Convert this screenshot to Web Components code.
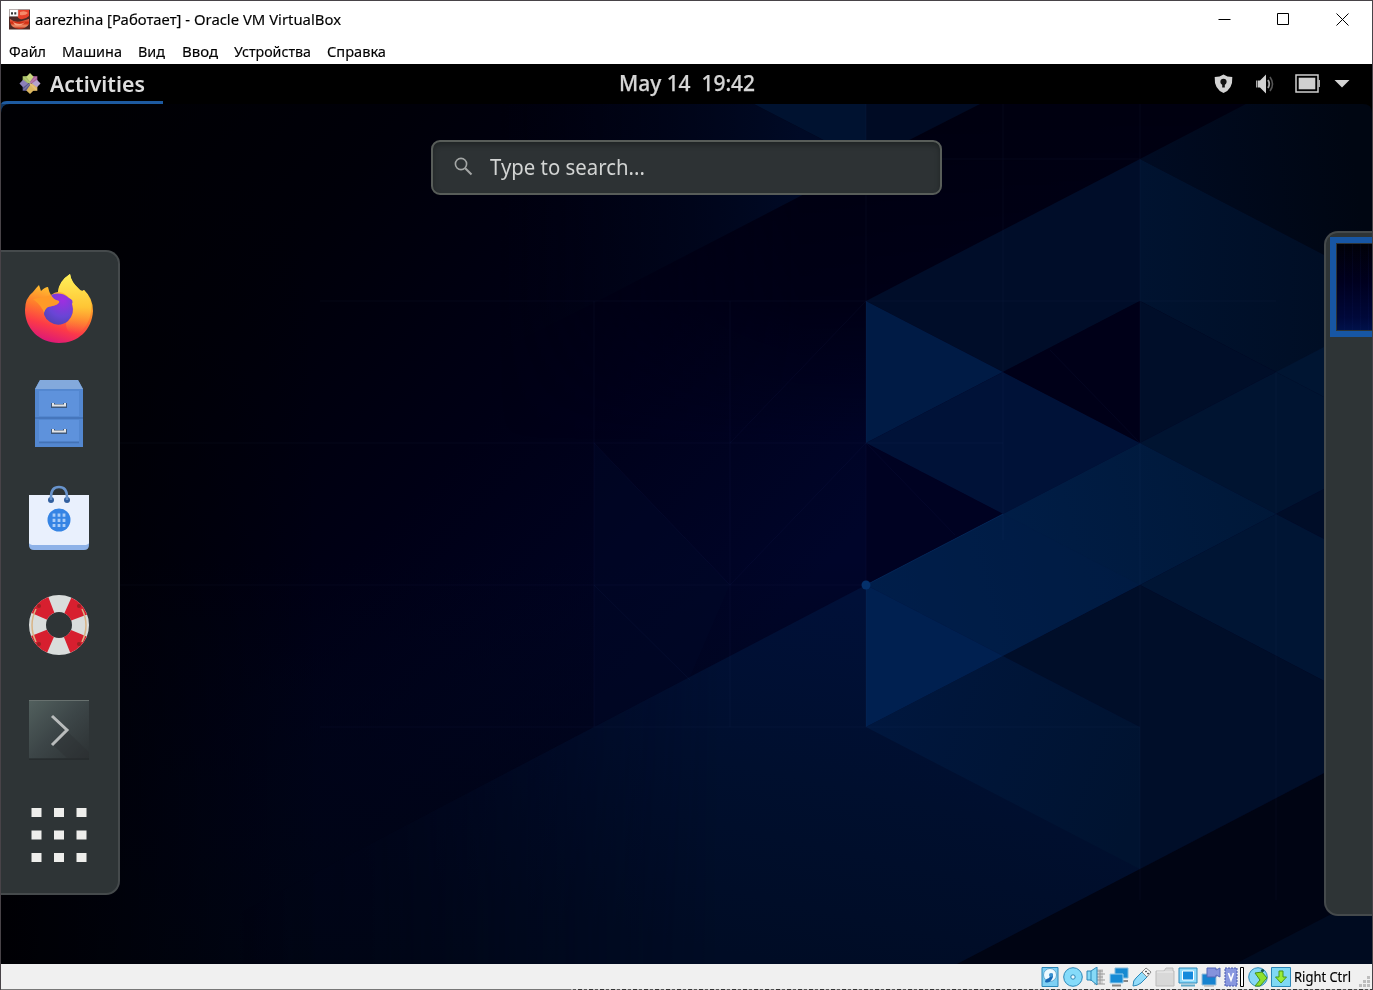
<!DOCTYPE html>
<html lang="ru"><head><meta charset="utf-8"><title>aarezhina [Работает] - Oracle VM VirtualBox</title>
<style>html,body{margin:0;height:990px;overflow:hidden;background:#fff}</style></head>
<body><vm-window></vm-window>
<script>
const define=(name,html,after)=>customElements.define(name,class extends HTMLElement{
  connectedCallback(){ if(this.shadowRoot) return;
    const t=document.createElement('template'); t.innerHTML=html;
    this.attachShadow({mode:'open'}).append(t.content.cloneNode(true));
    if(after) after(this); }
});

/* text squeezed or stretched to a given advance width */
define('fit-text',`<style>:host{display:inline-block;white-space:pre;text-align:left}span{display:inline-block;transform-origin:0 50%}</style><span><slot></slot></span>`,
 el=>{const s=el.shadowRoot.querySelector('span'),w=+el.getAttribute('w');const n=s.offsetWidth;el.style.width=w+'px';if(n)s.style.transform='scaleX('+(w/s.getBoundingClientRect().width)+')';});

define('title-bar',`<style>
:host{display:flex;height:37px;background:#fff;align-items:center;padding:0 9px 0 8px;color:#000;font:15px/20px "Noto Sans","Open Sans",sans-serif;-webkit-text-stroke:.15px #000}
fit-text{margin:-1px auto 0 5px}
.c{width:13px;height:13px;margin-left:46px;fill:none;stroke:#000;stroke-width:1}
.c:last-child{margin-right:14px}svg{display:block}
</style>
<svg width="21" height="21" viewBox="0 0 21 21" style="margin-top:-1px"><defs><linearGradient id="r" x2="0" y2="1"><stop stop-color="#e9745a"/><stop offset=".4" stop-color="#d0260c"/><stop offset=".7" stop-color="#f09068"/><stop offset="1" stop-color="#b01504"/></linearGradient></defs>
<rect width="21" height="20" y=".5" fill="#4d2a26"/><path d="M8 1h12v6q-4 4-9 3-4-2-2-6z" fill="#e8402a"/><path d="M11 3q5-2 8 1-3 3-8 2z" fill="#f58a6a"/><path d="M1 10q5 4 12 2l7-2v5q-3 5-10 5-8-1-9-7z" fill="url(#r)"/><path d="M4 13q7 4 12 0-4 5-10 3z" fill="#f6a283"/><rect x=".5" y=".8" width="8.5" height="6.4" fill="#fff" stroke="#bbb" stroke-width=".5"/><path d="M2 3.2h2v2.400H2zM5.300 3.200h2v2.400h-2z" fill="#333"/></svg>
<fit-text w="306">aarezhina [Работает] - Oracle VM VirtualBox</fit-text>
<svg class="c" viewBox="0 0 13 13"><path d="M.5 6.500h12"/></svg>
<svg class="c" viewBox="0 0 13 13"><path d="M.5.500h11v11H.5z"/></svg>
<svg class="c" viewBox="0 0 13 13"><path d="M.5.500l12 12m0-12l-12 12"/></svg>`);

define('menu-bar',`<style>:host{display:flex;height:26px;background:#fff;gap:16.200px;padding-left:8px;color:#000;font:14.500px/26px "Noto Sans","Open Sans",sans-serif;-webkit-text-stroke:.15px #000}</style>
<fit-text w="37">Файл</fit-text><fit-text w="60">Машина</fit-text><fit-text w="27">Вид</fit-text><fit-text w="36">Ввод</fit-text><fit-text w="77">Устройства</fit-text><fit-text w="59">Справка</fit-text>`);

define('gnome-panel',`<style>
:host{display:grid;grid-template-columns:1fr auto 1fr;height:40px;background:#000;color:#d6d6d6;font:500 22px/36px "Noto Sans","Open Sans",sans-serif;position:relative}
.a{display:flex;align-items:center;gap:9px;padding-left:18px;height:37px;font-weight:600;color:#dedede}
.s{display:flex;justify-content:flex-end;align-items:center;height:39px;padding-right:22px}
.m{-webkit-text-stroke:.25px #d6d6d6}
svg{display:block}.u{position:absolute;left:0;top:36px}</style>
<div class="a"><svg width="22" height="23" style="margin-top:2px" viewBox="-12 -12 24 24">
<path d="M-8-8h8v8h-8z" fill="#a3bd62"/><path d="M0-8h8v8H0z" fill="#aa629e"/><path d="M0 0h8v8H0z" fill="#e3b865"/><path d="M-8 0h8v8h-8z" fill="#5b5992"/>
<path d="M0-11.500 4-7.500 0-2-4-7.500z" fill="#c8d77e"/><path d="M11.500 0 7.500 4 2 0 7.500-4z" fill="#b6a2cc"/><path d="M0 11.500-4 7.500 0 2 4 7.500z" fill="#dbb65e"/><path d="M-11.500 0-7.500-4-2 0-7.500 4z" fill="#8b80b8"/>
<path d="M-7-7 7 7M7-7-7 7" stroke="#e4dcc8" stroke-opacity=".55" stroke-width=".8"/></svg><fit-text w="95">Activities</fit-text></div>
<fit-text class="m" w="136">May 14  19:42</fit-text>
<div class="s">
<svg width="19" height="20" viewBox="0 0 19 20"><path d="M9.500 0.500 Q13 3 18.300 3 Q19 15 9.500 19 Q0 15 .7 3 Q6 3 9.500 .5z" fill="#d3d3d3"/><circle cx="9.500" cy="7.800" r="3.100" fill="#111"/><path d="M8.200 8h2.600v5.500H8.200z" fill="#111"/></svg>
<svg style="margin-left:23px" width="18" height="20" viewBox="0 0 18 20"><path d="M0 6.500h1.500v7H0z" fill="#aaa"/><path d="M2 6.500h2L10 0.500v19l-6-6H2z" fill="#d0d0d0"/><path d="M12 6q2.500 4 0 8" fill="none" stroke="#a0a0a0" stroke-width="1.800"/><path d="M14 3q5 7 0 14" fill="none" stroke="#555" stroke-width="1.600"/></svg>
<svg style="margin-left:21px" width="26" height="20" viewBox="0 0 26 20"><path d="M1 1h22v17H1z" fill="none" stroke="#cfcfcf" stroke-width="1.500"/><path d="M3.700 3.700h16.600v11.600H3.700z" fill="#d0d0d0"/><path d="M23 6h2v7h-2z" fill="#aaa"/></svg>
<svg style="margin-left:13px" width="16" height="9" viewBox="0 0 16 9"><path d="M.5 1h15L8 8.500z" fill="#d5d5d5"/></svg></div>
<svg class="u" width="162" height="4" viewBox="0 0 162 4"><path d="M0 4Q1 1 6 1H162V4z" fill="#1d5aa0"/></svg>`);

define('desk-wallpaper',`<style>:host{display:block;position:absolute;inset:0}svg{display:block}</style>
<svg width="1371" height="860" viewBox="1 104 1371 860" shape-rendering="geometricPrecision"><defs>
<linearGradient id="base" gradientUnits="userSpaceOnUse" x1="60" y1="104" x2="700" y2="700"><stop stop-color="#000002"/><stop offset=".3" stop-color="#000009"/><stop offset=".6" stop-color="#000015"/><stop offset="1" stop-color="#00052a"/></linearGradient>
<linearGradient id="bl" gradientUnits="userSpaceOnUse" x1="0" y1="560" x2="0" y2="964"><stop stop-color="#000516" stop-opacity="0"/><stop offset=".6" stop-color="#000416" stop-opacity=".8"/><stop offset="1" stop-color="#000514"/></linearGradient>
<linearGradient id="lk" gradientUnits="userSpaceOnUse" x1="0" y1="0" x2="320" y2="0"><stop stop-color="#000004"/><stop offset=".35" stop-color="#000004" stop-opacity=".65"/><stop offset="1" stop-color="#000008" stop-opacity="0"/></linearGradient>
<linearGradient id="ur" gradientUnits="userSpaceOnUse" x1="0" y1="104" x2="0" y2="440"><stop stop-color="#000010"/><stop offset=".6" stop-color="#000014" stop-opacity=".8"/><stop offset="1" stop-color="#000018" stop-opacity="0"/></linearGradient>
<linearGradient id="urh" gradientUnits="userSpaceOnUse" x1="500" y1="0" x2="800" y2="0"><stop stop-color="#000"/><stop offset="1" stop-color="#fff"/></linearGradient><mask id="um" maskUnits="userSpaceOnUse" x="0" y="0" width="1400" height="1000"><path d="M0 0H1400V1000H0z" fill="url(#urh)"/></mask>
<linearGradient id="fh" gradientUnits="userSpaceOnUse" x1="240" y1="0" x2="720" y2="0"><stop stop-color="#000"/><stop offset=".3" stop-color="#222"/><stop offset="1" stop-color="#fff"/></linearGradient><mask id="fm" maskUnits="userSpaceOnUse" x="0" y="0" width="1400" height="1000"><path d="M0 0H1400V1000H0z" fill="url(#fh)"/></mask>
<linearGradient id="low" gradientUnits="userSpaceOnUse" x1="860" y1="600" x2="780" y2="964"><stop stop-color="#001038"/><stop offset=".5" stop-color="#000f2e"/><stop offset="1" stop-color="#000c25"/></linearGradient>
<linearGradient id="tr" gradientUnits="userSpaceOnUse" x1="1150" y1="160" x2="1350" y2="130"><stop stop-color="#000b22"/><stop offset="1" stop-color="#000612"/></linearGradient>
<linearGradient id="vv" gradientUnits="userSpaceOnUse" x1="1140" y1="0" x2="1323" y2="0"><stop stop-color="#001330"/><stop offset="1" stop-color="#000e25"/></linearGradient>
<linearGradient id="tp" gradientUnits="userSpaceOnUse" x1="500" y1="0" x2="800" y2="0"><stop stop-color="#000412" stop-opacity="0"/><stop offset="1" stop-color="#000a26"/></linearGradient>
<linearGradient id="br" gradientUnits="userSpaceOnUse" x1="866" y1="585" x2="1276" y2="480"><stop stop-color="#00204e"/><stop offset="1" stop-color="#001838"/></linearGradient>
<linearGradient id="pp" gradientUnits="userSpaceOnUse" x1="880" y1="700" x2="1140" y2="800"><stop stop-color="#00173e"/><stop offset="1" stop-color="#001330"/></linearGradient>
</defs>
<path d="M0 104H1372V964H0z" fill="url(#base)"/>
<path d="M500 104H1372V440H500z" fill="url(#ur)" mask="url(#um)"/>
<path d="M0 560H1372V964H0z" fill="url(#bl)"/>
<path d="M500 104H754L866 162 594 303 450 375z" fill="url(#tp)"/>
<path d="M754 104H866V162z" fill="#001230"/><path d="M866 104H980L866 162z" fill="#000b24"/>
<path d="M594 443 730 585 690 677 594 727z" fill="#000828" opacity=".5"/>
<path d="M866 585 594 727 142 964H1372V727z" fill="url(#low)" mask="url(#fm)"/>
<path d="M0 104H320V964H0z" fill="url(#lk)"/>
<path d="M866 301 1140 159V301L1003 372z" fill="#000d29"/>
<path d="M866 301 1003 372 866 443z" fill="#001b45"/>
<path d="M866 443 1003 372 1140 443 1003 514z" fill="#001238"/>
<path d="M866 443 1003 514 866 585z" fill="#000222"/>
<path d="M1003 372 1140 301V443z" fill="#000018"/>
<path d="M1140 159 1246 104H1372V280z" fill="url(#tr)"/>
<path d="M1140 159 1372 280V422L1276 372 1140 301z" fill="url(#vv)"/>
<path d="M1140 301 1276 372 1140 443z" fill="#000e29"/>
<path d="M1276 372 1372 322V422z" fill="#001532"/>
<path d="M1140 443 1276 372 1372 422V464L1276 514z" fill="#001431"/>
<path d="M866 585 1003 514 1140 443 1276 514 1140 585 1003 656z" fill="url(#br)"/>
<path d="M1003 514 1140 585 1003 656 866 585z" fill="#001c46" opacity=".5"/>
<path d="M1276 514 1372 464V564z" fill="#000d28"/>
<path d="M1276 514 1372 564V706L1140 585z" fill="#001534"/>
<path d="M866 585 1003 656 866 727z" fill="#002050"/>
<path d="M866 727 1003 656 1140 727V869z" fill="url(#pp)"/>
<path d="M1003 656 1140 585 1372 706V748L1140 869V727z" fill="#000e29"/>
<path d="M1140 869 1372 748V964H957z" fill="#000413"/>
<path d="M1235 964 1372 893V964z" fill="#000b20"/>
<g stroke="#3c64b4" stroke-opacity=".06" fill="none"><path d="M594 301V727M730 301V727M866 104V727M1003 104V540M1140 104V900M1276 372V900M700 159H1140M320 301H1276M120 443H1003M120 585H866M320 727H1140"/><path d="M866 443 730 585 594 443M866 443 955 535M1050 350 1140 443M594 585 690 680M730 443 866 301"/></g>
<path d="M866 585 1003 514" stroke="#063064" stroke-opacity=".6"/>
<circle cx="866" cy="585" r="4.500" fill="#04306b"/>
<path d="M1 104H10Q1 104 1 113z" fill="#1d5aa0" opacity=".6"/><path d="M1372 104v9q0-9-9-9z" fill="#000"/>
</svg>`);

define('search-entry',`<style>:host{display:flex;box-sizing:border-box;width:511px;height:55px;border:2px solid #585d59;border-radius:9px;background:#2d3234;box-shadow:inset 0 3px 5px #202526;align-items:center;padding:0 0 3px 21px;color:#d2d4d3;font:22px/38px "Noto Sans","Open Sans",sans-serif}svg{display:block;margin:1px 17px 0 0}fit-text{margin-top:-1px}</style>
<svg width="19" height="19" viewBox="0 0 19 19" fill="none" stroke="#a4a7a6" stroke-width="1.600"><circle cx="7" cy="7" r="5.600"/><path d="M11.200 11.200 17.500 17.500" stroke-width="2"/></svg><fit-text w="155">Type to search...</fit-text>`);

define('app-dash',`<style>:host{display:flex;flex-direction:column;align-items:center;box-sizing:border-box;width:119px;height:645px;background:#2e3436;border:2px solid #454a4c;border-left:0;border-radius:0 14px 14px 0;padding:5px 1px 0 0}
svg{display:block;width:76px;height:76px;margin:0 0 29.300px;flex:none}</style>
<svg viewBox="-38 -38 76 76" style="margin-top:14px"><defs><linearGradient id="f" x1=".7" y1="0" x2=".4" y2="1"><stop offset=".05" stop-color="#fff052"/><stop offset=".3" stop-color="#ffb92f"/><stop offset=".55" stop-color="#ff7a2c"/><stop offset=".78" stop-color="#fc3a48"/><stop offset="1" stop-color="#dc1878"/></linearGradient><linearGradient id="y" x2="0" y2="1"><stop stop-color="#fff15a"/><stop offset=".55" stop-color="#ffc535"/><stop offset="1" stop-color="#ff8a35" stop-opacity="0"/></linearGradient><radialGradient id="p" cx=".65" cy=".2" r=".9"><stop stop-color="#a02ee0"/><stop offset=".6" stop-color="#6945d5"/><stop offset="1" stop-color="#4e42b0"/></radialGradient></defs>
<path d="M-20-24Q-18-18-18-18-14-22-11-22-10-17-8-14Q-4-17-1-17Q0-28 11-35Q12-27 20-20Q23-17 25-19Q34-11 34 2C33 21 19 34 0 34S-34 20-34 1Q-34-11-26-17Q-23-21-20-24z" fill="url(#f)"/>
<path d="M-1-17Q0-28 11-35Q12-27 20-20 22-16 25-19 34-9 32 3 30 17 19 25 7 26 7 14 19 4 11-10 5-18-1-17z" fill="url(#y)"/>
<path d="M-8-14Q2-18 10-11 15-9 13-5 16 5 9 12 0 19-9 13-18 7-14-2-8-2-3-4 1-6 0-8-6-9-8-14z" fill="url(#p)"/>
<path d="M-26-10Q-14-12-8-14-6-9 0-8-1-4-7-3-13-3-15 4-17-3-26-10z" fill="#ff9a28"/></svg>
<svg viewBox="-38 -38 76 76"><path d="M-19-34H19L24-25V33H-24V-25z" fill="#5387d0"/><path d="M-19-34H19L24-25H-24z" fill="#83a9dc"/><path d="M-20-23H20V2H-20zM-20 6H20V27H-20z" fill="#5e92dc"/><path d="M-24 4H24M-20 28.500H20" stroke="#4372b5" stroke-width="1.500"/><path d="M-6-11v3H6v-3M-6 15v3H6v-3" fill="none" stroke="#3f587a" stroke-width="4"/><path d="M-6-11v2.500H6v-2.500M-6 15v2.500H6v-2.500" fill="none" stroke="#e1e3e6" stroke-width="2"/></svg>
<svg viewBox="-38 -37 76 76"><path d="M-30-24H30V26Q30 31 25 31H-25Q-30 31-30 26z" fill="#8eb2e8"/><path d="M-30-24H30V24Q29 26 25 26H-25Q-29 26-30 24z" fill="#e9f0fd"/><circle cx="-8" cy="-19" r="3" fill="#315f9f"/><circle cx="8" cy="-19" r="3" fill="#315f9f"/><path d="M-8-19V-22Q-8-32 0-32T8-22V-19" fill="none" stroke="#6893cc" stroke-width="2.500"/><circle cy="1" r="11.500" fill="#3584e4"/><path d="M-5-5.500V8M0-5.500V8M5-5.500V8" stroke="#a9cdf8" stroke-width="2.800" stroke-dasharray="3.200 2"/></svg>
<svg viewBox="-38 -37 76 76"><circle r="21.500" cy="1" fill="none" stroke="#d9dddc" stroke-width="17"/><g transform="translate(0 1)" fill="none" stroke="#d71f2f" stroke-width="17"><circle r="21.500" stroke-dasharray="16.885 16.885" stroke-dashoffset="-8.440"/></g><g fill="none" stroke="#d9b486" stroke-width="1.500"><path d="M-23-15Q-31 1-23 18M23-15Q31 1 23 18"/></g><g fill="#922"><circle cx="-20" cy="-18" r="2"/><circle cx="20" cy="-18" r="2"/><circle cx="-20" cy="20" r="2"/><circle cx="20" cy="20" r="2"/></g></svg>
<svg viewBox="-38 -38 76 76"><defs><linearGradient id="t" x2="1" y2="1"><stop stop-color="#52605e"/><stop offset=".5" stop-color="#3c4547"/><stop offset="1" stop-color="#2c3133"/></linearGradient></defs><path d="M-30-30H30V29H-30z" fill="url(#t)"/><path d="M-30-29.500H30" stroke="#68716f"/><path d="M-30 29H30" stroke="#202526"/><path d="M8 1 30 22V29H9L-6 15z" fill="#2a2f31" opacity=".35"/><path d="M-7-14 8 0-7 15" fill="none" stroke="#b9bcbc" stroke-width="3"/></svg>
<svg viewBox="-38 -38 76 76"><path d="M-27.500-27h10v9h-10zM-5-27H5v9H-5zM17.500-27h10v9h-10zM-27.500-4.500h10v9h-10zM-5-4.500H5v9H-5zM17.500-4.500h10v9h-10zM-27.500 18h10v9h-10zM-5 18H5v9H-5zM17.500 18h10v9h-10z" fill="#eeeeec"/></svg>`);

define('workspace-strip',`<style>:host{display:block;box-sizing:border-box;width:48px;height:685px;background:#2e3436;border:2px solid #454a4c;border-right:0;border-radius:14px 0 0 14px;padding:4px 0 0 4px}
div{box-sizing:border-box;height:100px;border:6px solid #1756a4;border-right:0;background:#2e3436;padding:1px 0 1px 1px}
p{margin:0;height:86px;background:repeating-linear-gradient(90deg,#0000 0 7px,#1a2b8018 7px 8px),linear-gradient(#010108,#00001f 45%,#000839 85%,#00114a)}</style><div><p></p></div>`);

define('activities-view',`<style>:host{display:grid;grid-template-columns:119px 1fr 48px;height:860px;position:relative;overflow:hidden;background:#000010}
app-dash,workspace-strip,search-entry{position:relative}app-dash{margin-top:146px}search-entry{justify-self:center;margin:36px 72px 0 0}workspace-strip{margin-top:127px}</style>
<desk-wallpaper></desk-wallpaper><app-dash></app-dash><search-entry></search-entry><workspace-strip></workspace-strip>`);

const B='stroke="#2b87b8"';
define('status-bar',`<style>:host{display:flex;justify-content:flex-end;align-items:flex-start;height:26px;background:#f0f0f0;color:#000;font:13.500px/26px "Noto Sans","Open Sans",sans-serif;-webkit-text-stroke:.15px #000;padding-right:2px}svg{display:block;margin:3px 3px 0 0;width:20px;height:20px;flex:none}fit-text{margin:0 8px 0 0}svg.g{width:11px;height:11px;margin:12px 0 0}</style>
<svg viewBox="0 0 20 20"><path d="M2 .5h16v19H2z" fill="#7ed0f4" ${B}/><circle cx="10" cy="8" r="6.500" fill="#eef9ff" stroke="#62a8d0"/><path d="M12 6q2 3 0 6-3 5-7 3 0-3 4-4z" fill="#1668b5"/><circle cx="11" cy="8" r="2" fill="#3b92d0"/></svg>
<svg viewBox="0 0 20 20"><circle cx="10" cy="10" r="9.300" fill="#85dbfa" ${B}/><circle cx="10" cy="10" r="2.200" fill="#e9faff" ${B}/></svg>
<svg viewBox="0 0 20 20"><path d="M9 2h8v15H9z" fill="#d5d5d5"/><path d="M10 4h7M10 7h9M10 10h7M10 13h9M8 17h11M14 3v14" stroke="#999"/><path d="M1 4h4l6-4v18l-6-5H1z" fill="#86d9f6" ${B}/><path d="M5 4v10" ${B}/></svg>
<svg viewBox="0 0 20 20"><path d="M6 1h13v10H6z" fill="#1689d1" stroke="#83bad9"/><path d="M14 14h5" stroke="#888" stroke-width="2"/><path d="M1 7h13v9H1z" fill="#168bd6" stroke="#9acdeb"/><path d="M3 18.500h9" stroke="#858585" stroke-width="2"/></svg>
<svg viewBox="0 0 20 20"><path d="M1 19Q1 13 4 11L10 5 15 10 9 16Q5 19 1 19z" fill="#92dcfa" ${B}/><path d="M10 5 14 1 19 5 15 10z" fill="#f8f8f8" stroke="#888"/><path d="M13.500 4l1 1m1 1 1 1" stroke="#333" stroke-width="1.500"/></svg>
<svg viewBox="0 0 20 20"><path d="M1 4h8l2-3h7v3h1v15H1z" fill="#d8d8d8" stroke="#bbb"/><path d="M2 5h16" stroke="#eee"/></svg>
<svg viewBox="0 0 20 20"><path d="M1 1h18v15H1z" fill="#8bd9fa" ${B}/><path d="M4.500 4h11v9h-11z" fill="#1689dc" stroke="#fff"/><path d="M3 18.500h14" stroke="#61a9c9" stroke-width="2"/></svg>
<svg viewBox="0 0 20 20"><path d="M1 7h14v11H1z" fill="#1783d0" stroke="#9bbfd8"/><path d="M6 1h9v2l4-2v9l-4-2v2H6z" fill="#8592dc" stroke="#5367b8"/><path d="M3 19h10" stroke="#aaa"/></svg>
<svg style="width:14px;margin-right:2px" viewBox="3 0 14 20"><path d="M4 1h12v18H4z" fill="#8897df" stroke="#4557ad" stroke-dasharray="2 1"/><path d="M7.500 6 10 13 12.500 6" fill="none" stroke="#fff" stroke-width="1.600"/></svg>
<svg style="width:5px" viewBox="0 0 5 20"><path d="M.5.500h3v19h-3z" fill="#fff" stroke="#000"/></svg>
<svg viewBox="0 0 20 20"><ellipse cx="10" cy="10" rx="9.300" ry="9.300" fill="#86d8f7" ${B}/><path d="M7 6 14 5 19 11 12 19H7L12 13z" fill="#8fe02e" stroke="#469019"/><circle cx="14.500" cy="3.500" r="1.600" fill="#155"/></svg>
<svg viewBox="0 0 20 20"><path d="M.5.500h19v19H.500z" fill="#7fd8f4" ${B}/><path d="M8 4h4v6h3.500L10 16 4.500 10H8z" fill="#9aed35" stroke="#479719"/></svg>
<fit-text w="57">Right Ctrl</fit-text>
<svg class="g" viewBox="0 0 11 11"><path d="M8 0h3v3H8zM4 4h3v3H4zM8 4h3v3H8zM0 8h3v3H0zM4 8h3v3H4zM8 8h3v3H8z" fill="#bdbdbd"/></svg>`);

define('vm-window',`<style>:host{display:flex;flex-direction:column;box-sizing:border-box;width:1373px;height:990px;border:1px solid #484348;border-bottom:0;overflow:hidden;position:relative}
i{position:absolute;left:0;right:0;bottom:0;height:1px;background:linear-gradient(90deg,#777 570px,#0000 570px),repeating-linear-gradient(90deg,#555 0 3px,#d0d0d0 3px 5px,#333 5px 9px,#bbb 9px 11px)}</style>
<title-bar></title-bar><menu-bar></menu-bar><gnome-panel></gnome-panel><activities-view></activities-view><status-bar></status-bar><i></i>`);
</script></body></html>
